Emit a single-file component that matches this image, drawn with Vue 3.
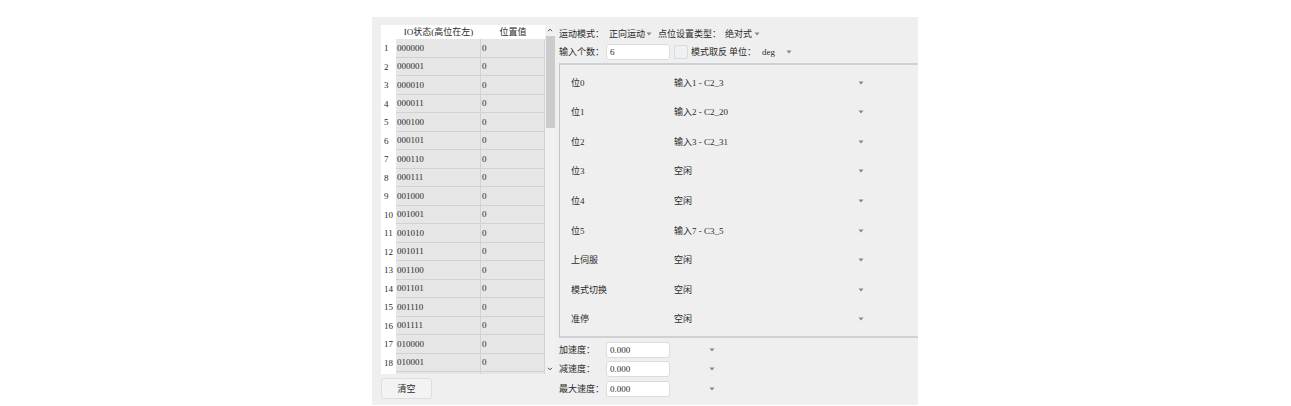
<script setup>
import { ref } from 'vue'

const rows = Array.from({ length: 18 }, (_, i) => ({
  no: i + 1,
  state: i.toString(2).padStart(6, '0'),
  value: '0',
}))

const count = ref('6')
const inverted = ref(false)

const bits = [
  { label: '位0', value: '输入1 - C2_3' },
  { label: '位1', value: '输入2 - C2_20' },
  { label: '位2', value: '输入3 - C2_31' },
  { label: '位3', value: '空闲' },
  { label: '位4', value: '空闲' },
  { label: '位5', value: '输入7 - C3_5' },
  { label: '上伺服', value: '空闲' },
  { label: '模式切换', value: '空闲' },
  { label: '准停', value: '空闲' },
]

const speeds = ref([
  { label: '加速度：', value: '0.000' },
  { label: '减速度：', value: '0.000' },
  { label: '最大速度：', value: '0.000' },
])
</script>

<template>
  <main class="page">
    <section class="panel">
      <div class="left">
        <div class="table-area">
          <table class="states">
            <colgroup>
              <col class="col-no" />
              <col class="col-state" />
              <col class="col-value" />
            </colgroup>
            <thead>
              <tr>
                <td></td>
                <th scope="col">IO状态(高位在左)</th>
                <th scope="col">位置值</th>
              </tr>
            </thead>
            <tbody>
              <tr v-for="row in rows" :key="row.no">
                <th scope="row">{{ row.no }}</th>
                <td>{{ row.state }}</td>
                <td>{{ row.value }}</td>
              </tr>
            </tbody>
            <tfoot>
              <tr>
                <td></td>
                <td></td>
                <td></td>
              </tr>
            </tfoot>
          </table>
          <div class="scrollbar">
            <svg class="chevron" viewBox="0 0 6 4"><path d="M1 3.2 3 1.2 5 3.2" /></svg>
            <div class="track"><div class="thumb"></div></div>
            <svg class="chevron" viewBox="0 0 6 4"><path d="M1 0.8 3 2.8 5 0.8" /></svg>
          </div>
        </div>
        <button type="button" class="clear">清空</button>
      </div>

      <div class="right">
        <div class="line first">
          <label class="name" for="mode">运动模式：</label>
          <span class="pick mode">
            <select id="mode"><option>正向运动</option></select>
            <svg viewBox="0 0 6 4"><path d="M0.5 0.5h5L3 3.5z" /></svg>
          </span>
          <label class="type-name" for="type">点位设置类型：</label>
          <span class="pick type">
            <select id="type"><option>绝对式</option></select>
            <svg viewBox="0 0 6 4"><path d="M0.5 0.5h5L3 3.5z" /></svg>
          </span>
        </div>
        <div class="line">
          <label class="name" for="count">输入个数：</label>
          <input id="count" v-model="count" class="field" type="text" />
          <label class="check">
            <input v-model="inverted" type="checkbox" />模式取反
          </label>
          <label class="unit-name" for="unit">单位：</label>
          <span class="pick unit">
            <select id="unit"><option>deg</option></select>
            <svg viewBox="0 0 6 4"><path d="M0.5 0.5h5L3 3.5z" /></svg>
          </span>
        </div>

        <div class="bits">
          <div v-for="(bit, i) in bits" :key="bit.label" class="bit">
            <label :for="`bit-${i}`">{{ bit.label }}</label>
            <span class="pick">
              <select :id="`bit-${i}`"><option>{{ bit.value }}</option></select>
              <svg viewBox="0 0 6 4"><path d="M0.5 0.5h5L3 3.5z" /></svg>
            </span>
          </div>
        </div>

        <div class="speeds">
          <div v-for="(speed, i) in speeds" :key="speed.label" class="line">
            <label :id="`speed-name-${i}`" class="name" :for="`speed-${i}`">{{ speed.label }}</label>
            <input :id="`speed-${i}`" v-model="speed.value" class="field" type="text" />
            <span class="pick speed-unit">
              <select :aria-labelledby="`speed-name-${i}`"><option></option></select>
              <svg viewBox="0 0 6 4"><path d="M0.5 0.5h5L3 3.5z" /></svg>
            </span>
          </div>
        </div>
      </div>
    </section>
  </main>
</template>

<style>
body {
  background: #fff;
}
</style>

<style scoped>
.page {
  display: grid;
  grid-template-columns: 372fr 546fr 373fr;
  padding-top: 17px;
  font: 9px/12px "Liberation Serif", "Noto Sans CJK SC", serif;
  color: #2b2b2b;
}
.page * {
  box-sizing: border-box;
}
.panel {
  grid-column: 2;
  display: grid;
  grid-template-columns: 174fr 359fr;
  column-gap: 4px;
  padding: 7px 0 6px 9px;
  background: #efefef;
}
.left {
  display: flex;
  flex-direction: column;
  align-items: flex-start;
  gap: 4px;
  padding-top: 1px;
}
.table-area {
  display: flex;
  flex: 1;
  width: 100%;
}
.states {
  flex: 1;
  table-layout: fixed;
  border-collapse: separate;
  border-spacing: 0;
  background: #fff;
}
.col-no {
  width: 15px;
}
.col-value {
  width: 64px;
}
.states th,
.states td {
  padding: 0;
  font-weight: normal;
  line-height: 12px;
  white-space: nowrap;
}
.states thead tr {
  height: 14px;
}
.states tfoot tr {
  height: 2px;
}
.states tbody th {
  padding-left: 3px;
  text-align: left;
}
.states tbody td {
  padding-left: 1px;
  background: #e6e6e6;
  border-right: 1px solid #d2d2d2;
  border-bottom: 1px solid #d2d2d2;
}
.states tfoot td + td {
  background: #e6e6e6;
  border-right: 1px solid #d2d2d2;
}
.scrollbar {
  display: flex;
  flex-direction: column;
  align-items: center;
  width: 10px;
  padding: 3px 0;
  background: #f1f1f1;
}
.chevron {
  width: 6px;
  height: 4px;
  fill: none;
  stroke: #444;
}
.track {
  flex: 1;
  width: 100%;
  padding: 4px 0 4px 1px;
}
.thumb {
  height: 28%;
  background: #cbcbcb;
}
.clear {
  width: 51px;
  height: 21px;
  padding: 0;
  border: 1px solid #dedede;
  border-radius: 3px;
  background: #f3f3f3;
  font: inherit;
  color: inherit;
}
.right {
  display: flex;
  flex-direction: column;
}
.line {
  display: flex;
  align-items: center;
  height: 18px;
  white-space: nowrap;
}
.first {
  height: 19px;
}
.name {
  width: 47px;
}
.field {
  width: 64px;
  height: 16px;
  padding: 0 3px;
  border: 1px solid #dcdcdc;
  border-radius: 3px;
  background: #fff;
  font: inherit;
  color: inherit;
}
.pick {
  display: flex;
  align-items: center;
  position: relative;
}
.pick select {
  appearance: none;
  width: 100%;
  height: 14px;
  padding: 0;
  border: 0;
  background: transparent;
  font: inherit;
  color: inherit;
}
.pick svg {
  position: absolute;
  right: 0;
  width: 6px;
  height: 4px;
  fill: #858585;
  pointer-events: none;
}
.mode {
  width: 43px;
  margin-left: 3px;
}
.type-name {
  margin-left: 6px;
}
.type {
  width: 35px;
  margin-left: 4px;
}
.check {
  display: flex;
  align-items: center;
  gap: 3px;
  margin-left: 4px;
}
.check input {
  appearance: none;
  width: 14px;
  height: 14px;
  margin: 0;
  border: 1px solid #d5dde2;
  border-radius: 2px;
  background: #f1f1f1;
}
.check input:checked {
  background: #7aa7c7;
}
.unit-name {
  margin-left: 2px;
}
.unit {
  width: 30px;
  margin-left: 6px;
}
.bits {
  display: grid;
  grid-template-rows: repeat(9, 1fr);
  height: 275px;
  margin-top: 2px;
  padding: 3px 0 2px 11px;
  border: 2px solid #cdd2d6;
  border-left: 1px solid #bfc4c9;
  border-right: 0;
}
.bit {
  display: grid;
  grid-template-columns: 103fr 190fr 54fr;
  align-items: center;
}
.speeds {
  display: grid;
  grid-template-rows: repeat(3, 1fr);
  align-items: center;
  height: 59px;
  margin-top: 2px;
}
.speed-unit {
  width: 45px;
}
</style>
